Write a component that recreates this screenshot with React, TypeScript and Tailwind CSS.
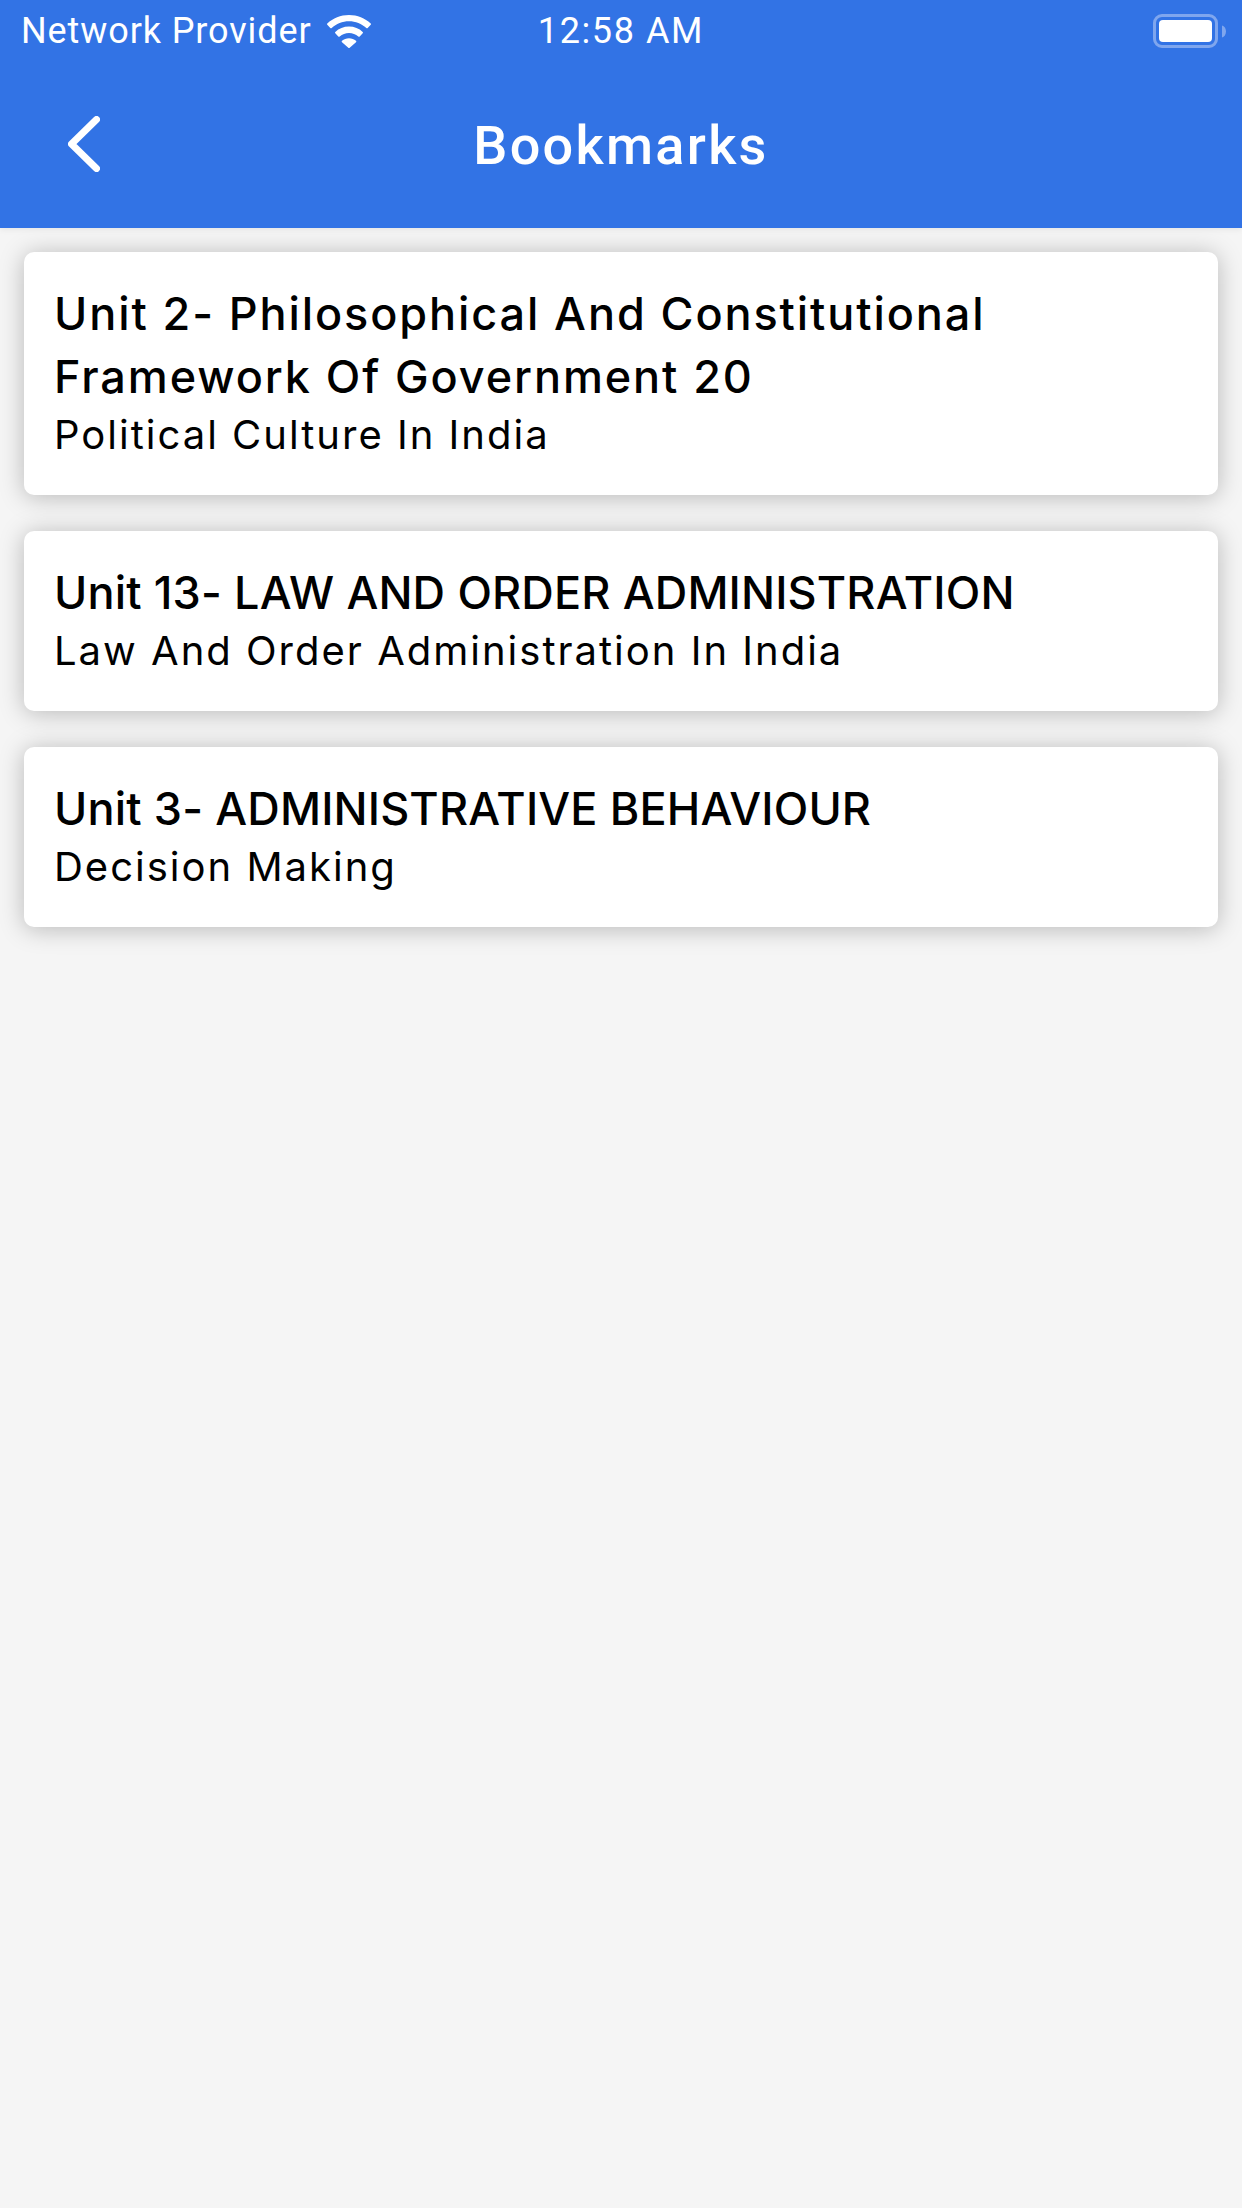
import React from "react";

const bookmarks = [
  {
    unit: "Unit 2- Philosophical And Constitutional Framework Of Government 20",
    topic: "Political Culture In India",
    spacing: "tracking-[1.9px]",
  },
  {
    unit: "Unit 13- LAW AND ORDER ADMINISTRATION",
    topic: "Law And Order Administration In India",
    spacing: "tracking-[0.15px]",
  },
  {
    unit: "Unit 3- ADMINISTRATIVE BEHAVIOUR",
    topic: "Decision Making",
    spacing: "tracking-[0.15px]",
  },
];

const WifiIcon = () => (
  <svg viewBox="0 0 44 33" className="w-[44px] h-[33px] ml-[15px] fill-white">
    <path d="M22 0C13.6 0 6 3.2 0.3 8.4a1 1 0 0 0 0 1.4l3 3.2a1 1 0 0 0 1.4 0C9.3 8.8 15.4 6.2 22 6.2s12.7 2.6 17.3 6.8a1 1 0 0 0 1.4 0l3-3.2a1 1 0 0 0 0-1.4C38 3.2 30.4 0 22 0z" />
    <path d="M22 11.6c-5.3 0-10.1 2-13.7 5.3a1 1 0 0 0 0 1.4l3 3.2a1 1 0 0 0 1.4 0C15.3 19.3 18.5 18 22 18s6.7 1.3 9.3 3.5a1 1 0 0 0 1.4 0l3-3.2a1 1 0 0 0 0-1.4C32.1 13.6 27.3 11.6 22 11.6z" />
    <path d="M22 23.2c-2.7 0-5.1 1-7 2.6a1 1 0 0 0 0 1.4l6.3 5.5a1 1 0 0 0 1.4 0l6.3-5.5a1 1 0 0 0 0-1.4c-1.9-1.6-4.3-2.6-7-2.6z" />
  </svg>
);

const BatteryIcon = () => (
  <div className="flex items-center">
    <div className="w-[65px] h-[34px] rounded-[9px] border-[3px] border-[#7fa6ee] p-[3px]">
      <div className="w-full h-full rounded-[4px] bg-white"></div>
    </div>
    <svg viewBox="0 0 4 12" className="w-[4px] h-[13px] ml-[4px] fill-[#7fa6ee]">
      <path d="M0 0c2.4 0.6 4 3 4 6s-1.6 5.400-4 6z" />
    </svg>
  </div>
);

const BackIcon = () => (
  <svg
    viewBox="0 0 32 56"
    fill="none"
    className="w-[32px] h-[56px] mb-[4px] stroke-white stroke-[7px]"
    strokeLinecap="round"
    strokeLinejoin="round"
  >
    <path d="M28.500 3.500L3.500 28l25 24.500" />
  </svg>
);

const BookmarkCard = ({ unit, topic, spacing }: { unit: string; topic: string; spacing: string }) => (
  <div className="bg-white rounded-[10px] shadow-[0_2px_24px_rgba(0,0,0,0.25)] px-[30px] pt-[30px] pb-[33px] text-black font-['Inter',sans-serif]">
    <div className={`text-[45px] leading-[63px] font-medium ${spacing}`}>{unit}</div>
    <div className="text-[40px] leading-[54px] font-normal tracking-[2px]">{topic}</div>
  </div>
);

export default function App() {
  return (
    <div className="w-[1242px] h-[2208px] bg-[#f5f5f5] font-['Roboto',sans-serif]">
      <div className="bg-[#3273e5] h-[228px] text-white shadow-[0_2px_6px_rgba(0,0,0,0.06)]">
        <div className="grid grid-cols-3 items-center h-[60px] pl-[21px] pr-[16px] pt-[2px]">
          <div className="flex items-center text-[36px] font-normal leading-none tracking-[0.9px] whitespace-nowrap">
            <span>Network Provider</span>
            <WifiIcon />
          </div>
          <div className="text-center text-[36px] font-normal leading-none tracking-[1.6px] pr-[5px]">12:58 AM</div>
          <div className="flex justify-end">
            <BatteryIcon />
          </div>
        </div>
        <div className="flex items-center h-[168px] pl-[68px] pr-[68px] pt-[4px]">
          <BackIcon />
          <div className="flex-1 text-center text-[54px] font-medium leading-none tracking-[2.3px] pr-[32px]">Bookmarks</div>
        </div>
      </div>
      <div className="flex flex-col gap-[36px] px-[24px] pt-[24px]">
        {bookmarks.map((b) => (
          <BookmarkCard key={b.unit} unit={b.unit} topic={b.topic} spacing={b.spacing} />
        ))}
      </div>
    </div>
  );
}
